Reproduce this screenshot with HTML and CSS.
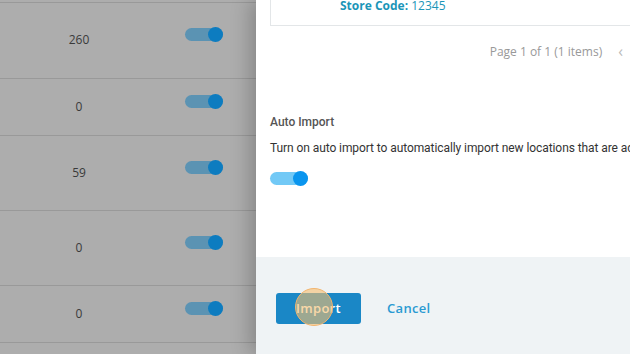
FILE: index.html
```html
<!DOCTYPE html>
<html lang="en">
<head>
  <meta charset="UTF-8">
  <title>Import Locations</title>
  <link rel="stylesheet" href="styles.css">
</head>
<body>
  <div class="page">
    <div class="table">
      <div class="row row-a"><span class="count">260</span><span class="switch dim"></span></div>
      <div class="row row-b"><span class="count">0</span><span class="switch dim"></span></div>
      <div class="row row-a"><span class="count">59</span><span class="switch dim"></span></div>
      <div class="row row-a"><span class="count">0</span><span class="switch dim"></span></div>
      <div class="row row-b"><span class="count">0</span><span class="switch dim"></span></div>
      <div class="row row-end"></div>
    </div>

    <div class="drawer">
      <div class="store-box">
        <p class="store-code"><b>Store Code:</b> 12345</p>
      </div>

      <div class="pager">
        <span>Page 1 of 1 (1 items)</span>
        <span class="chev">&lsaquo;</span>
      </div>

      <div class="auto">
        <h3>Auto Import</h3>
        <p>Turn on auto import to automatically import new locations that are added to this account.</p>
        <span class="switch on"></span>
      </div>

      <div class="footer">
        <button class="btn-import">Import<span class="click"></span></button>
        <a class="btn-cancel">Cancel</a>
      </div>
    </div>
  </div>
</body>
</html>
```

FILE: styles.css
```css
html, body {
  margin: 0;
  padding: 0;
  width: 100%;
  height: 100%;
  overflow: hidden;
}

.page {
  display: flex;
  height: 100%;
}

/* dimmed table behind the drawer */
.table {
  width: 256px;
  flex-shrink: 0;
  background-color: #adadad;
  padding-top: 2px;
  font-family: "Open Sans", sans-serif;
  font-size: 12px;
  color: #3a3a3a;
}

.row {
  display: grid;
  grid-template-columns: 158px 27px 38px;
  align-items: center;
  border-top: 1px solid #999;
  box-sizing: border-box;
}

.row-a { height: 75px; }
.row-b { height: 57px; }
.row-a:first-child { height: 76px; }
.row-end { height: 20px; }

.count {
  text-align: center;
  grid-column: 1;
  margin-bottom: 2px;
}

.switch {
  position: relative;
  display: block;
  width: 38px;
  height: 13px;
  border-radius: 7px;
}

.switch::after {
  content: "";
  position: absolute;
  right: 0;
  top: -1px;
  width: 15px;
  height: 15px;
  border-radius: 50%;
}

.switch.dim {
  grid-column: 3;
  margin-bottom: 12px;
  background-color: #5b93b3;
}

.switch.dim::after {
  background-color: #0d7cc0;
}

.switch.on {
  background-color: #72c9f6;
}

.switch.on::after {
  background-color: #0a95ee;
}

/* drawer */
.drawer {
  flex: 1;
  display: flex;
  flex-direction: column;
  background: #fff;
  box-shadow: -6px 0 18px rgba(0, 0, 0, 0.22);
  position: relative;
  min-width: 0;
  overflow: hidden;
}

.store-box {
  margin: -30px -20px 0 14px;
  height: 56px;
  border: 1px solid #e3e6e8;
  box-sizing: border-box;
  padding: 27px 0 0 69px;
}

.store-code {
  margin: 0;
  font-family: "Open Sans", sans-serif;
  font-size: 12px;
  line-height: 16px;
  color: #1b95b8;
}

.store-code b {
  font-weight: 700;
}

.pager {
  display: flex;
  justify-content: flex-end;
  align-items: center;
  gap: 16px;
  padding: 14px 7px 0 0;
  font-family: "Open Sans", sans-serif;
  font-size: 12px;
  color: #999;
}

.chev {
  font-size: 16px;
  color: #bbb;
}

.auto {
  padding: 52px 0 0 14px;
  font-family: Roboto, sans-serif;
}

.auto h3 {
  margin: 0;
  font-size: 12px;
  font-weight: 500;
  color: #555;
  line-height: 16px;
}

.auto p {
  margin: 10px 0 0;
  font-size: 12px;
  line-height: 16px;
  letter-spacing: -0.08px;
  color: #333;
  white-space: nowrap;
}

.auto .switch {
  margin-top: 16px;
}

.footer {
  margin-top: auto;
  height: 97px;
  background-color: #eff3f5;
  display: flex;
  align-items: center;
  padding: 5px 0 0 20px;
  box-sizing: border-box;
  gap: 26px;
}

.btn-import {
  position: relative;
  width: 85px;
  height: 31px;
  border: none;
  border-radius: 3px;
  background-color: #1a87c6;
  color: #fff;
  font-family: "Open Sans", sans-serif;
  font-size: 13px;
  font-weight: 600;
  letter-spacing: 0.3px;
  padding: 0;
}

.click {
  position: absolute;
  left: 19px;
  top: -5px;
  width: 36px;
  height: 36px;
  border-radius: 50%;
  border: 1.5px solid #f3b56e;
  background-color: rgba(245, 190, 110, 0.6);
}

.btn-cancel {
  font-family: "Open Sans", sans-serif;
  font-size: 13px;
  font-weight: 600;
  letter-spacing: 0.3px;
  color: #2a9ad2;
}
```
